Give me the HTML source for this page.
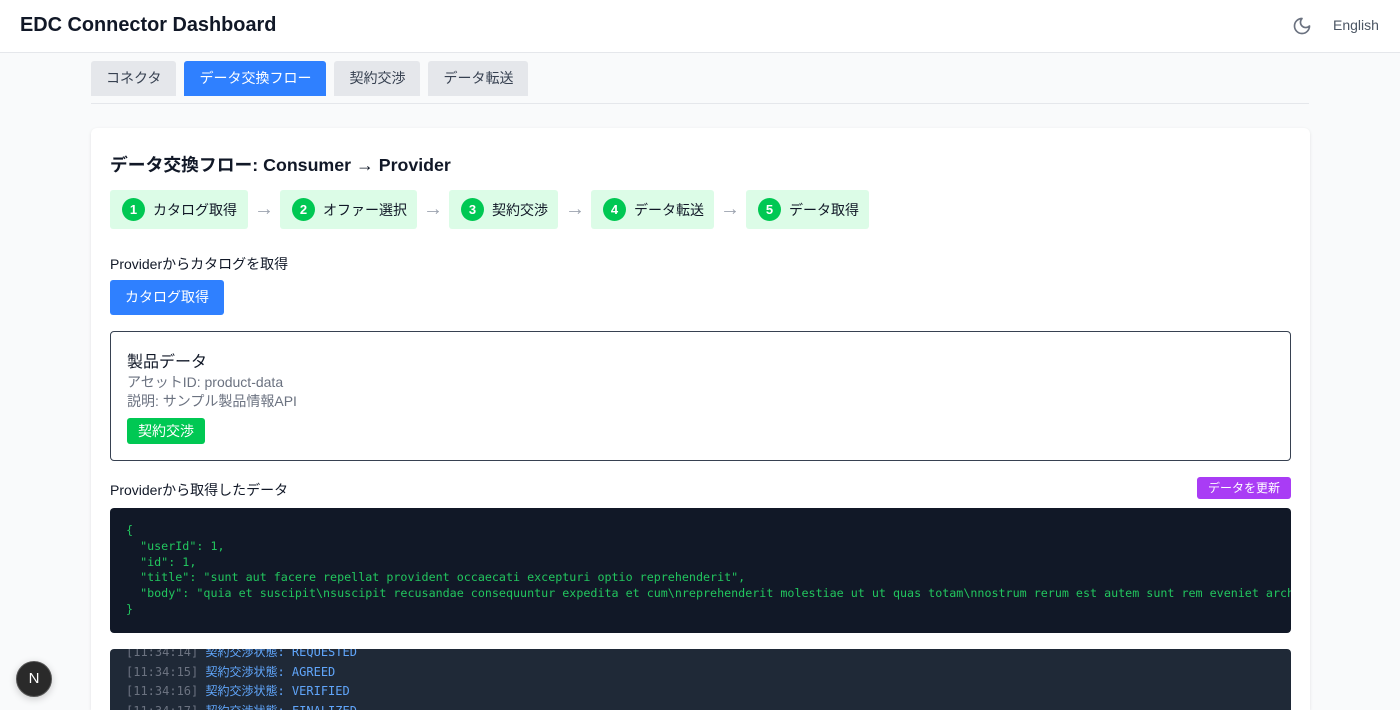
<!DOCTYPE html>
<html><head><meta charset="utf-8"><style>
*{box-sizing:border-box;margin:0;padding:0}
html,body{width:1400px;height:710px;overflow:hidden}
body{background:#f9fafb;font-family:"Liberation Sans","Noto Sans CJK JP",sans-serif;color:#111827;position:relative}
.hdr{height:53px;background:#fff;border-bottom:1px solid #e5e7eb;position:relative}
.hdr h1{position:absolute;left:20px;top:14px;font-size:19.9px;font-weight:700}
.hdr .en{position:absolute;left:1333px;top:17px;font-size:14px;color:#4b5563}
.hdr svg{position:absolute;left:1292px;top:16px}
.tabs{position:absolute;left:91px;top:61px;display:flex;gap:8px}
.tab{height:35px;padding:0 15px;line-height:35px;font-size:14px;background:#e5e7eb;color:#374151;border-radius:3px 3px 0 0}
.tab.a{background:#2f80ff;color:#fff}
.div{position:absolute;left:91px;top:103px;width:1218px;height:1px;background:#e5e7eb}
.card{position:absolute;left:91px;top:128px;width:1219px;height:582px;background:#fff;border-radius:6px 6px 0 0;box-shadow:0 1px 3px rgba(0,0,0,.1)}
.abs{position:absolute}
.step{position:absolute;top:62px;height:39px;background:#dcfce7;border-radius:3px;display:flex;align-items:center;padding-left:12px;font-size:14px}
.step b{width:23px;height:23px;border-radius:50%;background:#00c853;color:#fff;font-size:13px;display:inline-flex;align-items:center;justify-content:center;margin-right:8px}
.arr{position:absolute;top:70px;color:#9ca3af;font-size:20px;line-height:22px}
pre{font-family:"DejaVu Sans Mono","Noto Sans CJK JP",monospace}
</style></head><body>
<div class="hdr"><h1>EDC Connector Dashboard</h1>
<svg width="20" height="20" viewBox="0 0 24 24" fill="none" stroke="#6b7280" stroke-width="2" stroke-linecap="round" stroke-linejoin="round"><path d="M12 3a6 6 0 0 0 9 9 9 9 0 1 1-9-9Z"/></svg>
<span class="en">English</span></div>
<div class="tabs"><div class="tab">コネクタ</div><div class="tab a">データ交換フロー</div><div class="tab">契約交渉</div><div class="tab">データ転送</div></div>
<div class="div"></div>
<div class="card">
<div class="abs" style="left:19px;top:23px;font-size:17.8px;font-weight:700">データ交換フロー: Consumer → Provider</div>
<div class="step" style="left:19px;width:138px"><b>1</b>カタログ取得</div>
<div class="arr" style="left:163px">→</div>
<div class="step" style="left:189px;width:137px"><b>2</b>オファー選択</div>
<div class="arr" style="left:332px">→</div>
<div class="step" style="left:358px;width:109px"><b>3</b>契約交渉</div>
<div class="arr" style="left:474px">→</div>
<div class="step" style="left:500px;width:123px"><b>4</b>データ転送</div>
<div class="arr" style="left:629px">→</div>
<div class="step" style="left:655px;width:123px"><b>5</b>データ取得</div>
<div class="abs" style="left:19px;top:126px;font-size:14px">Providerからカタログを取得</div>
<div class="abs" style="left:19px;top:152px;width:114px;height:35px;background:#2f80ff;color:#fff;border-radius:3px;font-size:14px;line-height:35px;text-align:center">カタログ取得</div>
<div class="abs" style="left:19px;top:203px;width:1181px;height:130px;border:1px solid #374151;border-radius:4px">
<div class="abs" style="left:16px;top:16px;font-size:16px">製品データ</div>
<div class="abs" style="left:16px;top:41px;font-size:14px;color:#6b7280;line-height:19px">アセットID: product-data<br>説明: サンプル製品情報API</div>
<div class="abs" style="left:16px;top:86px;width:78px;height:26px;background:#00c853;color:#fff;border-radius:3px;font-size:14px;line-height:26px;text-align:center">契約交渉</div>
</div>
<div class="abs" style="left:19px;top:352px;font-size:14px">Providerから取得したデータ</div>
<div class="abs" style="left:1106px;top:349px;width:94px;height:22px;background:#a93cf5;color:#fff;border-radius:3px;font-size:12px;line-height:22px;text-align:center">データを更新</div>
<div class="abs" style="left:19px;top:380px;width:1181px;height:125px;background:#111827;border-radius:4px;overflow:hidden">
<pre style="position:absolute;left:16px;top:15px;font-size:11.7px;line-height:15.8px;color:#22c55e;white-space:pre">{
  "userId": 1,
  "id": 1,
  "title": "sunt aut facere repellat provident occaecati excepturi optio reprehenderit",
  "body": "quia et suscipit\nsuscipit recusandae consequuntur expedita et cum\nreprehenderit molestiae ut ut quas totam\nnostrum rerum est autem sunt rem eveniet architecto"
}</pre></div>
<div class="abs" style="left:19px;top:521px;width:1181px;height:61px;background:#1f2937;border-radius:4px 4px 0 0;overflow:hidden">
<pre style="position:absolute;left:16px;top:-6px;font-size:12px;line-height:19.5px;color:#60a5fa"><span style="color:#6b7280">[11:34:14]</span> 契約交渉状態: REQUESTED
<span style="color:#6b7280">[11:34:15]</span> 契約交渉状態: AGREED
<span style="color:#6b7280">[11:34:16]</span> 契約交渉状態: VERIFIED
<span style="color:#6b7280">[11:34:17]</span> 契約交渉状態: FINALIZED</pre></div>
</div>
<div class="abs" style="left:16px;top:661px;width:36px;height:36px;border-radius:50%;background:#2a2a2a;border:1px solid #555;box-shadow:0 2px 8px rgba(0,0,0,.2);color:#fff;font-size:15px;line-height:34px;text-align:center">N</div>
</body></html>
